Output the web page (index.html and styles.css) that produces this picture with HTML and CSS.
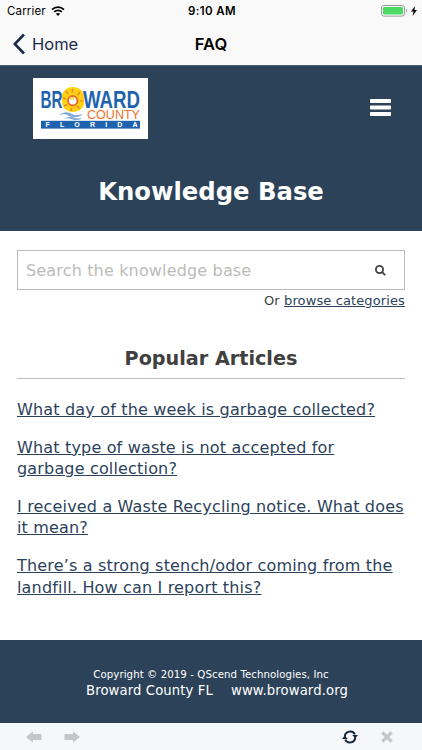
FILE: index.html
```html
<!DOCTYPE html>
<html lang="en">
<head>
    <meta charset="UTF-8">
    <meta name="viewport" content="width=device-width, initial-scale=1">
    <title>FAQ</title>
    <link rel="stylesheet" href="styles.css">
</head>
<body>
    <div class="status-bar">
        <div class="carrier">
            <span>Carrier</span>
            <svg class="wifi" viewBox="0 0 14 10">
                <path d="M1 3.6C4.4.4 9.6.4 13 3.6M3.2 5.9C5.4 4 8.6 4 10.8 5.9" fill="none" stroke="#000" stroke-width="1.8"/>
                <path d="M4.9 7.8C6.1 6.8 7.9 6.8 9.1 7.8L7 9.9Z"/>
            </svg>
        </div>
        <div class="time">9:10 AM</div>
        <div class="power">
            <svg class="battery" viewBox="0 0 27 12">
                <rect x=".5" y=".5" width="23" height="10.6" rx="2.3" fill="#fff" stroke="#999"/>
                <rect x="2" y="2" width="20" height="7.6" rx="1" fill="#4cd964"/>
                <path d="M25 3.8C26.5 4.5 26.5 7 25 7.7Z" fill="#999"/>
            </svg>
            <svg class="bolt" viewBox="0 0 6 10"><path d="M4.1 0L0 5.6H2.6L1.5 10L6 4.1H3.4Z"/></svg>
        </div>
    </div>

    <div class="nav-bar">
        <a class="back" href="#">
            <svg class="chevron" viewBox="0 0 14 22"><path d="M12 1.5L2.8 11L12 20.5"/></svg>
            <span>Home</span>
        </a>
        <div class="nav-title">FAQ</div>
    </div>

    <header class="header">
        <div class="header-top">
            <a class="logo" href="#">
                <svg viewBox="0 0 115 61">
                    <rect width="115" height="61" fill="#fff"/>
                    <path d="M33 11Q40 7 47 11Q52 15 51 22Q52 29 47 32Q40 36 33 32Q28 28 29 21Q28 15 33 11Z" fill="#fcd116"/>
                    <g class="logo-rays">
                        <path d="M39.5 11V14.5M33 13L35 16M47 14L44.5 17M30 20L33 21M50 23H47M31 28L34 26.5M38 33L38.5 30M46.5 30.5L44 28"/>
                    </g>
                    <text class="logo-name" x="7.5" y="29.5" textLength="22" lengthAdjust="spacingAndGlyphs">BR</text>
                    <circle cx="39.7" cy="22.7" r="4.7" fill="#fff" stroke="#ee702b" stroke-width="2"/>
                    <path d="M37.5 22C38 19 41 19 40.5 22" fill="none" stroke="#fcd116" stroke-width="1.2"/>
                    <text class="logo-name" x="50" y="29.5" textLength="57" lengthAdjust="spacingAndGlyphs">WARD</text>
                    <text class="logo-county" x="54" y="41.2" textLength="53" lengthAdjust="spacingAndGlyphs">COUNTY</text>
                    <path d="M26 37C31 33 36 34 39 36C42 38 46 37 50 36C46 40 40 40 36 38C33 36 30 36 26 37ZM31 41C35 38 39 39 42 40C45 41 47 40 49 40C46 43 41 42 38 41C35 40 33 40 31 41Z" fill="#83aad9"/>
                    <rect x="8" y="42.8" width="99" height="7.8" fill="#1f63ae"/>
                    <text class="logo-state" x="12.5" y="49.2" textLength="92">FLORIDA</text>
                </svg>
            </a>
            <svg class="menu" viewBox="0 0 21 17"><path d="M.6 0H20.4L21 .6V3.4L20.4 4H.6L0 3.4V.6ZM.6 6.5H20.4L21 7.1V9.9L20.4 10.5H.6L0 9.9V7.1ZM.6 13H20.4L21 13.6V16.4L20.4 17H.6L0 16.4V13.6Z"/></svg>
        </div>
        <h1>Knowledge Base</h1>
    </header>

    <main class="content">
        <form class="search">
            <input type="text" placeholder="Search the knowledge base">
            <svg class="search-icon" viewBox="0 0 11 11"><circle cx="4.5" cy="4.5" r="3.6"/><path d="M7.1 7.1L10.2 10.2"/></svg>
        </form>
        <div class="browse">Or <a href="#">browse categories</a></div>

        <h2>Popular Articles</h2>
        <ul class="articles">
            <li><a href="#">What day of the week is garbage collected?</a></li>
            <li><a href="#">What type of waste is not accepted for garbage collection?</a></li>
            <li><a href="#">I received a Waste Recycling notice. What does it mean?</a></li>
            <li><a href="#">There’s a strong stench/odor coming from the landfill. How can I report this?</a></li>
        </ul>
    </main>

    <footer class="footer">
        <div class="copyright">Copyright © 2019 - QScend Technologies, Inc</div>
        <div class="footer-links"><span>Broward County FL</span><span>www.broward.org</span></div>
    </footer>

    <div class="toolbar">
        <div class="toolbar-group">
            <svg class="arrow" viewBox="0 0 16 12"><path d="M0 6L7 .3V3H15.5V9H7V11.7Z"/></svg>
            <svg class="arrow" viewBox="0 0 16 12"><path d="M16 6L9 .3V3H.5V9H9V11.7Z"/></svg>
        </div>
        <div class="toolbar-group toolbar-right">
            <svg class="refresh" viewBox="0 0 16 14">
                <path d="M2.8 6.8C3 .8 10.5 -.2 12.8 4.4M13.2 7.2C13 13.2 5.5 14.2 3.2 9.6" fill="none" stroke="#142440" stroke-width="2"/>
                <path d="M10.2 5H16L13.3 8.3ZM5.8 9H0L2.7 5.7Z" fill="#142440"/>
            </svg>
            <svg class="close" viewBox="0 0 12 12"><path d="M1.3 1.3L10.7 10.7M10.7 1.3L1.3 10.7"/></svg>
        </div>
    </div>
</body>
</html>
```

FILE: styles.css
```css
* {
    box-sizing: border-box;
}
body {
    margin: 0;
    height: 750px;
    display: flex;
    flex-direction: column;
    overflow: hidden;
    background: #fff;
    color: #404040;
    font-family: "DejaVu Sans", sans-serif;
}
svg {
    display: block;
    flex: none;
}
a {
    color: #2c425a;
}

/* phone bars */
.status-bar,
.nav-bar {
    display: grid;
    grid-template-columns: 1fr auto 1fr;
    align-items: center;
    background: #f9f9f9;
    color: #000;
    font-family: Inter, sans-serif;
}
.status-bar {
    height: 22px;
    padding: 0 5px 0 7px;
    font-size: 11.5px;
}
.carrier {
    display: flex;
    align-items: center;
    gap: 5px;
    letter-spacing: 0.15px;
}
.wifi {
    width: 14px;
    height: 10px;
}
.time {
    font-weight: 600;
    letter-spacing: 0.4px;
}
.power {
    display: flex;
    justify-content: flex-end;
    align-items: center;
    gap: 3px;
}
.battery {
    width: 27px;
    height: 12px;
}
.bolt {
    width: 6px;
    height: 10px;
}
.nav-bar {
    height: 43px;
    padding: 0 12px;
}
.back {
    display: flex;
    align-items: center;
    gap: 6px;
    color: #1c2b49;
    font-size: 16.5px;
    text-decoration: none;
}
.chevron {
    width: 14px;
    height: 22px;
    fill: none;
    stroke: #1c2b49;
    stroke-width: 2.6;
}
.nav-title {
    font-size: 16.5px;
    font-weight: 600;
}

/* site header */
.header {
    height: 166px;
    background: #2c4259;
    border-top: 1px solid #4c6074;
}
.header-top {
    display: flex;
    justify-content: space-between;
    align-items: flex-start;
    padding: 12px 31px 0 33px;
}
.logo svg {
    width: 115px;
    height: 61px;
}
.logo-rays {
    fill: none;
    stroke: #f08a2a;
    stroke-width: 1.7;
}
.logo-name {
    fill: #1f63ae;
    font: bold 24px "Liberation Sans", sans-serif;
}
.logo-county {
    fill: #ee702b;
    font: 12.5px "Liberation Sans", sans-serif;
}
.logo-state {
    fill: #fff;
    font: bold 7px "Liberation Sans", sans-serif;
}
.menu {
    width: 21px;
    height: 17px;
    margin-top: 21px;
    fill: #fff;
}
h1 {
    margin: 38px 0 0;
    color: #fff;
    font-size: 24.3px;
    line-height: 30px;
    text-align: center;
}

/* knowledge base */
.content {
    flex: 1;
    padding: 19px 17px 0;
}
.search {
    display: flex;
    align-items: center;
    height: 40px;
    padding: 0 18px 0 8px;
    border: 1px solid #bbb;
}
.search input {
    flex: 1;
    min-width: 0;
    padding: 0;
    border: 0;
    outline: 0;
    background: none;
    font: 16px "DejaVu Sans", sans-serif;
    letter-spacing: 0.16px;
}
.search input::placeholder {
    color: #bbb;
}
.search-icon {
    width: 11px;
    height: 11px;
    fill: none;
    stroke: #404040;
    stroke-width: 1.8;
}
.browse {
    margin-top: 2px;
    font-size: 13px;
    line-height: 18px;
    letter-spacing: 0.12px;
    text-align: right;
}
h2 {
    margin: 36px 0 0;
    padding-bottom: 6px;
    border-bottom: 1px solid #bbb;
    font-size: 19.2px;
    line-height: 26px;
    text-align: center;
}
.articles {
    margin: 20px 0 0;
    padding: 0;
    list-style: none;
    font-size: 16px;
    line-height: 21.3px;
    letter-spacing: 0.17px;
}
.articles li {
    max-width: 388px;
    margin-bottom: 16.6px;
}
.articles li:nth-child(2) {
    padding-right: 40px;
}

/* footer */
.footer {
    height: 83px;
    padding-top: 27px;
    background: #2c4259;
    color: #fff;
    text-align: center;
}
.copyright {
    font-size: 10.2px;
    line-height: 15px;
    letter-spacing: 0.08px;
}
.footer-links {
    display: flex;
    justify-content: center;
    gap: 18px;
    margin-left: 12px;
    font-size: 13.2px;
    line-height: 17px;
    letter-spacing: 0.12px;
}

/* browser toolbar */
.toolbar {
    display: flex;
    justify-content: space-between;
    align-items: center;
    height: 27px;
    padding: 0 29px 0 26px;
    background: #f5f7f9;
}
.toolbar-group {
    display: flex;
    align-items: center;
    gap: 22px;
}
.toolbar-right {
    gap: 23px;
}
.arrow {
    width: 16px;
    height: 12px;
    fill: #c5c6c8;
}
.refresh {
    width: 16px;
    height: 14px;
}
.close {
    width: 12px;
    height: 12px;
    stroke: #c5c6c8;
    stroke-width: 3.2;
}
```
